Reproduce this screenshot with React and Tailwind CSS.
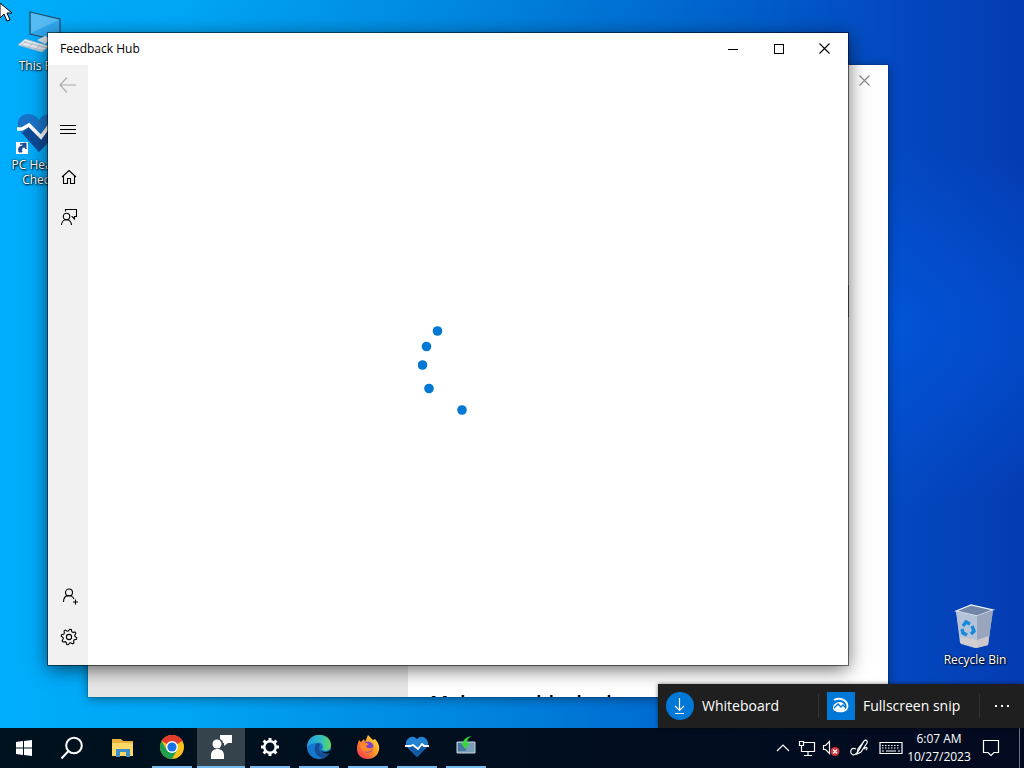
import React from "react";
import clsx from "clsx";

const DesktopIcon = ({ label, className, children }) => (
  <button
    type="button"
    className={clsx(
      "absolute flex w-[76px] flex-col items-center text-center text-xs leading-[15px] text-white [text-shadow:1px_1px_2px_#000,0_0_2px_#000]",
      className
    )}
  >
    {children}
    <span>{label}</span>
  </button>
);

const PcIcon = () => (
  <svg width="48" height="50" viewBox="0 0 48 50" aria-hidden="true">
    <path d="M15 4l30 7v22l-30-7z" fill="#2fa8ee" stroke="#294e66" strokeWidth="1.2" />
    <path d="M16 5l28 7-28 13z" fill="#79ccf8" opacity=".55" />
    <path d="M22 32l8-4 6 3-6 5z" fill="#d4dfe7" />
    <path d="M3 37l7-6 24 7-7 6z" fill="#e3e9ee" stroke="#9cb4c4" strokeWidth=".7" />
    <path d="M6 37l24 6M9 34l23 6M11 33l-5 5M18 35l-5 5M25 37l-5 5" stroke="#a5b9c6" strokeWidth=".8" />
  </svg>
);

const HealthIcon = () => (
  <svg width="48" height="48" viewBox="0 0 48 48" aria-hidden="true">
    <path d="M24 43L5 22C-1 12 6 5 13 5c5 0 9 3 11 6 2-3 6-6 11-6 8 0 14 8 7 19z" fill="#1a73c6" />
    <path d="M24 43L7 24l7-6 12 11 8-10 10 3z" fill="#0d4b97" />
    <path d="M2 20h5l7-4 12 12 8-11 4 4h8" fill="none" stroke="#fff" strokeWidth="3.5" />
    <path d="M1 33h12v12H1z" fill="#fff" />
    <path d="M4 43c-1-4 0-6 4-6v-2h-3l6-1v6l-1-2c-3 0-4 2-3 5z" fill="#164c9b" stroke="#164c9b" />
  </svg>
);

const BinIcon = () => (
  <svg width="48" height="50" viewBox="0 0 48 50" aria-hidden="true">
    <path d="M5 9l15-6 22 5-5 35-13 3-14-4z" fill="#aebbd0" />
    <path d="M5 9l15-6 22 5-16 6z" fill="#7386aa" stroke="#edf3f9" strokeWidth="1.2" />
    <path d="M26 14L42 8l-5 35-11 3z" fill="#98a5bd" />
    <path d="M5 9l21 5v32L9 41z" fill="#b4c3d8" />
    <path d="M9 35l17 3 12-4-1 9-12 3-16-5z" fill="#d9d2cf" opacity=".8" />
    <g fill="none" stroke="#1689dc" strokeWidth="3.400">
      <path d="M12 24l3-4 4 2" />
      <path d="M21 24l2 5-3 3" />
      <path d="M16 33l-4-2-1-4" />
    </g>
  </svg>
);

const Cross = () => (
  <svg width="12" height="12" viewBox="0 0 12 12" fill="none" stroke="currentColor" aria-hidden="true">
    <path d="M.5.5l10 10M10.500.5l-10 10" strokeWidth="1.1" />
  </svg>
);

const Caption = ({ label, children }) => (
  <button type="button" aria-label={label} className="flex h-8 w-[46px] items-center justify-center">
    {children}
  </button>
);

const NavButton = ({ label, className, children }) => (
  <button type="button" aria-label={label} className={clsx("flex h-10 w-10 items-center justify-center", className)}>
    <svg
      width="18"
      height="18"
      viewBox="0 0 18 18"
      fill="none"
      stroke="currentColor"
      strokeWidth="1.1"
      aria-hidden="true"
    >
      {children}
    </svg>
  </button>
);

const gearPoints = Array.from({ length: 32 }, (_, i) => {
  const r = i % 4 < 2 ? 7.8 : 6;
  const a = ((i + 0.5) * Math.PI) / 16;
  return `${(9 + r * Math.cos(a)).toFixed(2)},${(9 + r * Math.sin(a)).toFixed(2)}`;
}).join(" ");

const BackWindow = () => (
  <section
    aria-label="Background window"
    className="absolute top-[65px] right-[136px] bottom-[31px] left-[88px] flex overflow-hidden bg-white shadow-[0_0_0_1px_#0002,0_2px_10px_#0006]"
  >
    <div className="w-2/5 bg-[#e6e6e6]" />
    <div className="flex flex-1 flex-col overflow-hidden">
      <div className="flex justify-end text-[#888]">
        <Caption label="Close background window">
          <Cross />
        </Caption>
      </div>
      <button type="button" aria-label="Option" className="mt-[188px] mr-[39px] ml-6 h-8 bg-[#999]" />
      <div className="flex-1" />
      <p className="-mb-5 pl-[22px] text-xl leading-7 font-semibold whitespace-nowrap text-black">
        Make sure blocked
      </p>
    </div>
  </section>
);

// dots of the progress ring
const ringDots = [
  [19.5, 16],
  [8.5, 31.5],
  [4.5, 50],
  [11, 73.5],
  [44, 95]
];

const FeedbackHub = () => (
  <main className="absolute top-[33px] right-[176px] bottom-[63px] left-12 flex flex-col bg-white text-black shadow-[0_0_0_1px_#0008,0_4px_18px_#0009]">
    <header className="flex h-8 items-center">
      <h1 className="flex-1 pl-3 text-xs">Feedback Hub</h1>
      <Caption label="Minimize">
        <span className="h-px w-[10px] bg-black" />
      </Caption>
      <Caption label="Maximize">
        <span className="h-[10px] w-[10px] border border-black" />
      </Caption>
      <Caption label="Close">
        <Cross />
      </Caption>
    </header>
    <div className="flex flex-1">
      <nav className="flex w-10 flex-col bg-[#f1f1f1] pb-2">
        <NavButton label="Back" className="text-[#aaa]">
          <path d="M17 9H1.500M8 1.500L1 9l7 7.500" />
        </NavButton>
        <NavButton label="Menu" className="mt-1">
          <path d="M1 5.500h16M1 9.500h16M1 13.500h16" />
        </NavButton>
        <NavButton label="Home" className="mt-2 pl-0.5">
          <path d="M2 9l7-6.500L16 9M3.500 8v7.500h4v-5h3v5h4V8" />
        </NavButton>
        <NavButton label="Feedback" className="pl-0.5">
          <circle cx="6.500" cy="8.500" r="3.200" />
          <path d="M1.500 17c0-7 10-7 10 0M5.500 3.500v-2h11v7h-2v2.500l-2.500-2.500h-.5" />
        </NavButton>
        <div className="flex-1" />
        <NavButton label="Add account" className="pl-1">
          <circle cx="8" cy="4.500" r="3.500" />
          <path d="M2.500 14c0-8 8-8 10.500-3M14.500 11.500v5M12 14h5" />
        </NavButton>
        <NavButton label="Settings" className="pl-0.5">
          <polygon points={gearPoints} />
          <circle cx="9" cy="9" r="2.600" />
        </NavButton>
      </nav>
      <div className="flex flex-1 items-center justify-center" role="status" aria-label="Loading">
        <svg width="100" height="100" viewBox="0 0 100 100" aria-hidden="true">
          {ringDots.map(([x, y]) => (
            <circle key={y} cx={x} cy={y} r="4.800" fill="#0078d4" />
          ))}
        </svg>
      </div>
    </div>
  </main>
);

const InkMenu = () => (
  <div className="absolute right-0 bottom-0 flex h-11 items-center bg-[#1f1f1f] text-sm text-white shadow-[0_0_4px_#0008]">
    <button type="button" className="flex h-full w-40 items-center gap-2 pl-2">
      <svg width="28" height="28" viewBox="0 0 28 28" fill="none" stroke="#fff" strokeWidth="1.2" aria-hidden="true">
        <circle cx="14" cy="14" r="14" fill="#0078d7" stroke="none" />
        <path d="M13.500 6v12M9 14l4.500 4.500L18 14M9 21.500h9" />
      </svg>
      Whiteboard
    </button>
    <span className="h-6 w-px bg-[#333]" />
    <button type="button" className="flex h-full w-40 items-center gap-2 pl-2">
      <svg width="28" height="28" viewBox="0 0 28 28" aria-hidden="true">
        <path d="M0 0h28v28H0z" fill="#0078d7" />
        <path d="M7 8c6-3 13 0 13.500 6 0 6-9 7-13 3" fill="none" stroke="#fff" strokeWidth="1.800" />
        <path d="M6 15a7 5 0 013-4c3-2 8-1 9 3v3c-2 3-10 4-12 0z" fill="#fff" />
        <path d="M7 16l4-4 3 3 2-2 3 3" fill="none" stroke="#0078d7" strokeWidth="1.300" />
      </svg>
      Fullscreen snip
    </button>
    <span className="h-6 w-px bg-[#333]" />
    <button type="button" aria-label="More" className="flex h-full w-11 items-center justify-center gap-1">
      <span className="h-0.5 w-0.5 bg-white" />
      <span className="h-0.5 w-0.5 bg-white" />
      <span className="h-0.5 w-0.5 bg-white" />
    </button>
  </div>
);

const TaskButton = ({ label, open, active, children }) => (
  <button
    type="button"
    aria-label={label}
    className={clsx("flex h-10 w-12 flex-col items-center", active && "bg-[#35434d]")}
  >
    <span className="flex flex-1 items-center justify-center">
      <svg width="24" height="24" viewBox="0 0 24 24" aria-hidden="true">
        {children}
      </svg>
    </span>
    {open && <span className={clsx("h-0.5 bg-[#76b9ed]", active ? "w-12" : "w-10")} />}
  </button>
);

const TrayButton = ({ label, className, children }) => (
  <button type="button" aria-label={label} className={clsx("flex h-10 items-center justify-center", className)}>
    <svg
      width="24"
      height="24"
      viewBox="0 0 24 24"
      fill="none"
      stroke="#fff"
      strokeWidth="1.2"
      aria-hidden="true"
    >
      {children}
    </svg>
  </button>
);

const Taskbar = () => (
  <footer className="flex h-10 bg-linear-to-r from-[#00121e] to-[#020a20] text-white">
    <TaskButton label="Start">
      <path d="M4 6l7-1v6.500H4zM12 5l8-1v7.500h-8zM4 12.500h7V19l-7-1zM12 12.500h8V20l-8-1z" fill="#fff" />
    </TaskButton>
    <TaskButton label="Search">
      <g fill="none" stroke="#fff" strokeWidth="2">
        <circle cx="14" cy="9.500" r="7.800" />
        <path d="M8.500 15L1.500 22.500" />
      </g>
    </TaskButton>
    <div className="ml-[3px] flex gap-px">
      <TaskButton label="File Explorer">
        <path d="M1 3h9l2 2h10v15H1z" fill="#e9b13b" />
        <path d="M1 7h21v13H1z" fill="#ffd868" />
        <path d="M5 13h14v8h-4v-5H9v5H5z" fill="#3d8fc6" />
      </TaskButton>
      <TaskButton label="Chrome" open>
        <circle cx="12" cy="12" r="12" fill="#fbc21c" />
        <path d="M12 12L1.600 6A12 12 0 0122.400 6z" fill="#e33b2e" />
        <path d="M12 6h10.400A12 12 0 0012 0z" fill="#e33b2e" />
        <path d="M1.600 6A12 12 0 0012 24l5.200-9L12 12 6.800 15z" fill="#1f9d50" />
        <circle cx="12" cy="12" r="6" fill="#fff" />
        <circle cx="12" cy="12" r="4.600" fill="#1a73e8" />
      </TaskButton>
      <TaskButton label="Feedback Hub" open active>
        <g fill="#fff">
          <circle cx="8" cy="9" r="4.500" />
          <path d="M2 24v-4c0-8 13-8 13 0v4zM11 0h12v8h-4l-4 3V8h-1c0-2-1-3-3-4z" />
        </g>
      </TaskButton>
      <TaskButton label="Settings" open>
        <g fill="none" stroke="#fff">
          <circle cx="12" cy="12" r="5.700" strokeWidth="2.400" />
          <path
            d="M12 3v3M12 18v3M3 12h3M18 12h3M5.600 5.600l2.200 2.200M16.200 16.200l2.200 2.200M18.400 5.600l-2.200 2.200M7.800 16.200l-2.200 2.200"
            strokeWidth="3"
          />
        </g>
      </TaskButton>
      <TaskButton label="Edge" open>
        <defs>
          <linearGradient id="edgeTop" x1="0" x2="1">
            <stop offset="0" stopColor="#219be1" />
            <stop offset=".6" stopColor="#31bdc1" />
            <stop offset="1" stopColor="#62db52" />
          </linearGradient>
        </defs>
        <circle cx="12" cy="12" r="12" fill="#1479ce" />
        <path d="M0 12C1-5 24-3 24 10c0 5-5 7-9 5 3-5-1-8-5-7-5 0-8 2-10 4z" fill="url(#edgeTop)" />
        <path d="M10 8c-5 5-2 14 6 15 3-1 6-4 7-6-7 4-13-1-10-7 0-1-1-2-3-2z" fill="#174d96" />
        <path d="M14 11c-2 3 0 6 4 6 2 0 4-1 6-2l-1 3c-6 2-12-2-9-7z" fill="#00121e" />
      </TaskButton>
      <TaskButton label="Firefox" open>
        <defs>
          <linearGradient id="fox" x1="1" x2="0" y2="1">
            <stop offset="0" stopColor="#fff04c" />
            <stop offset=".45" stopColor="#ff9a27" />
            <stop offset="1" stopColor="#f22954" />
          </linearGradient>
        </defs>
        <path d="M1 11l2-6 2 2 3-3 1 3 3-7 5 5 2-1c3 3 5 7 4 11-2 12-21 12-22 0z" fill="url(#fox)" />
        <circle cx="12" cy="12" r="5.500" fill="#7544cf" />
        <path d="M4 8c4-2 6 0 9 1l-3 2c1 3 6 3 8 0-1 8-13 8-14-1z" fill="#ff8729" />
      </TaskButton>
      <TaskButton label="PC Health Check" open>
        <path d="M12 22L2 12C-2 5 7-2 12 4c5-6 14 1 10 8z" fill="#2284d1" />
        <path d="M12 22L3 13l5-2 4 3 4-4 6 2z" fill="#125aa5" />
        <path d="M0 11h5l3-1 5 4 4-5 2 2h5" fill="none" stroke="#fff" strokeWidth="1.800" />
      </TaskButton>
      <TaskButton label="Installer" open>
        <path d="M3 7h18v11H3z" fill="#789db7" stroke="#c7d4dc" />
        <path d="M4 8h8v8H4z" fill="#4874a0" />
        <path d="M18 1c-6 1-9 4-9 7H7l4 6 5-6h-3c0-3 1-5 5-7z" fill="#36d83b" />
      </TaskButton>
    </div>
    <div className="flex-1" />
    <TrayButton label="Show hidden icons" className="w-6">
      <path d="M6 15l6-6 6 6" />
    </TrayButton>
    <TrayButton label="Network" className="w-6">
      <path d="M9 6.500h10.500v9H6.500V12M13 16v3M9 19.500h8M4.500 5.500h4v4h-4zM6.500 10v3" />
    </TrayButton>
    <TrayButton label="Volume muted" className="w-6">
      <path d="M4.500 9.500h2l4-4v12l-4-4h-2z" />
      <circle cx="16" cy="15.500" r="4.500" fill="#d5323a" stroke="none" />
      <path d="M14 13.500l4 4M18 13.500l-4 4" />
    </TrayButton>
    <TrayButton label="Windows Ink" className="w-8">
      <path d="M9 13c-4-2-6 1-5 4 2 4 6 1 8-3l5-9c2-2 4 0 3 2l-6 9-4 2 1-5 6-8M17 13c3-3 4-1 2 1" />
    </TrayButton>
    <TrayButton label="Touch keyboard" className="w-8">
      <path d="M1 6.500h22v11H1z" />
      <path d="M3 9.500h18M3 12h18" strokeDasharray="1.500 1.500" />
      <path d="M3 15h2M7 15h10M19 15h2" />
    </TrayButton>
    <button type="button" className="w-16 text-center text-xs leading-[18px]">
      6:07 AM
      <br />
      10/27/2023
    </button>
    <TrayButton label="Notifications" className="w-10">
      <path d="M4.500 4.500h15v12H15l-3 3-3-3H4.500z" />
    </TrayButton>
    <button type="button" aria-label="Show desktop" className="ml-2 w-[5px] border-l border-[#6b7480]" />
  </footer>
);

const App = () => (
  <div className="flex h-screen flex-col overflow-hidden bg-[#0645bd] font-['Open_Sans','Noto_Sans',sans-serif]">
    <div className="relative flex-1 bg-[radial-gradient(ellipse_at_85%_45%,#0060ed88,transparent_32%),linear-gradient(90deg,#00adfc_0%,#00a5f5_18%,#0086df_45%,#0063cd_70%,#0447bf_88%,#043cb2_100%)]">
      <DesktopIcon label="This PC" className="top-2 left-px">
        <PcIcon />
      </DesktopIcon>
      <DesktopIcon label="PC Health Check" className="top-[109px] left-px">
        <HealthIcon />
      </DesktopIcon>
      <DesktopIcon label="Recycle Bin" className="right-[11px] bottom-[61px]">
        <BinIcon />
      </DesktopIcon>
      <BackWindow />
      <FeedbackHub />
      <InkMenu />
      <svg className="absolute top-0.5 left-0" width="13" height="20" viewBox="0 0 13 20" aria-hidden="true">
        <path d="M0 1v15l4-4 3 7 3-1-3-7h5z" fill="#fff" stroke="#000" />
      </svg>
    </div>
    <Taskbar />
  </div>
);

export default App;
